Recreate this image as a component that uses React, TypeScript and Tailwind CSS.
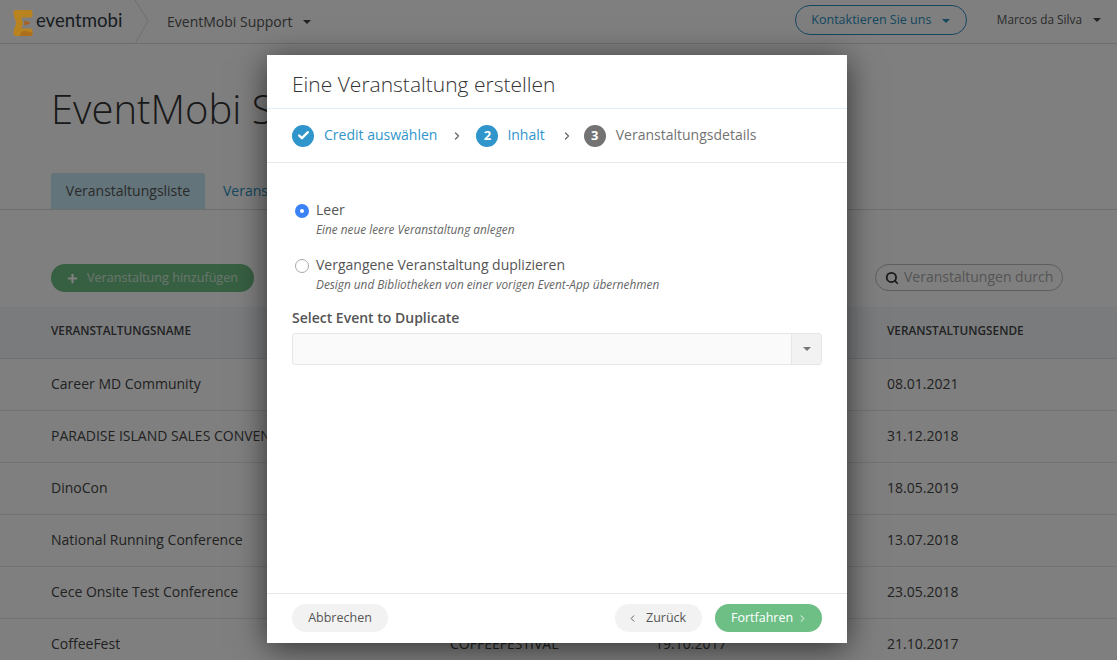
import React from 'react';
import { Check, ChevronLeft, ChevronRight, Plus, Search } from 'lucide-react';

const rows = [
  { name: 'Career MD Community', end: '08.01.2021' },
  { name: 'PARADISE ISLAND SALES CONVENTION', end: '31.12.2018' },
  { name: 'DinoCon', end: '18.05.2019' },
  { name: 'National Running Conference', end: '13.07.2018' },
  { name: 'Cece Onsite Test Conference', end: '23.05.2018' },
  { name: 'CoffeeFest', code: 'COFFEEFESTIVAL', start: '19.10.2017', end: '21.10.2017' },
];

const Caret: React.FC<{ className?: string }> = ({ className }) => (
  <svg width="8" height="4" viewBox="0 0 8 4" className={className}>
    <path d="M0 0h8L4 4z" fill="currentColor" />
  </svg>
);

const Logo: React.FC = () => (
  <svg width="20" height="26" viewBox="0 0 20 26" className="relative z-10">
    <path
      d="M2.500 0H17.500a2 2 0 0 1 2 2V5.500a2 2 0 0 1-2 2H8.500L10 13 8.500 18.500H17.500a2 2 0 0 1 2 2V23.500A2.500 2.500 0 0 1 17 26H3A2.500 2.500 0 0 1 .5 23.500C.5 18 3 16 3 13 3 10 .5 8 .5 2.500A2 2 0 0 1 2.500 0z"
      fill="#b98320"
    />
    <path d="M11.500 10.500L18 13l-6.500 2.500z" fill="#a8601c" />
    <path d="M7 26c0-3 2-5 5-5s5 2 7.500 1.500v1A2.500 2.500 0 0 1 17 26z" fill="#ad6f1e" />
  </svg>
);

const Page: React.FC = () => (
  <div className="h-[660px] overflow-hidden bg-white text-[#333]">
    <header className="flex h-11 items-center border-b border-[#ddd]">
      <div className="flex w-[137px] items-center pl-[13px] pt-0.5">
        <Logo />
        <span className="ml-[3px] -mt-1 font-['Lato',sans-serif] text-[18.600px] leading-none text-[#2f3a45]">eventmobi</span>
      </div>
      <svg width="16" height="44" viewBox="0 0 16 44" className="shrink-0 -ml-1">
        <path d="M2 0l13 21L2 44" fill="none" stroke="#ddd" />
      </svg>
      <span className="ml-[18px] text-sm text-[#555]">EventMobi Support</span>
      <Caret className="ml-[10px] text-[#444]" />
      <div className="ml-auto mb-[3px] flex h-[30px] w-[172px] items-center justify-center gap-[11px] rounded-full border border-[#2a8fbf] pt-px text-[12.500px] text-[#2a8fbf]">
        Kontaktieren Sie uns
        <Caret className="text-[#2a8fbf]" />
      </div>
      <span className="ml-[30px] mb-[3px] text-[11.800px] text-[#555]">Marcos da Silva</span>
      <Caret className="ml-[11px] mr-[16px] mb-[3px] text-[#444]" />
    </header>

    <h1 className="mt-[39px] pl-[51px] text-[40px] font-light leading-[52px] text-[#333]">EventMobi Support</h1>

    <nav className="mt-[38px] flex h-[37px] border-b border-[#ddd] pl-[51px] text-sm">
      <div className="flex w-[154px] items-center justify-center rounded-t-[3px] bg-[#c9e9f6] text-[#555]">Veranstaltungsliste</div>
      <div className="flex items-center pl-[18px] text-[#2a8fbf]">Veranstaltungsvorlagen</div>
    </nav>

    <div className="flex h-[97px] items-start justify-between px-[51px] pt-[54px] pr-[54px]">
      <div className="flex h-7 w-[203px] items-center rounded-full bg-[#6ebf85] pl-[15px] text-[12.600px] text-white">
        <Plus size={13} strokeWidth={4} />
        <span className="ml-2 opacity-70">Veranstaltung hinzufügen</span>
      </div>
      <div className="flex h-[27px] w-[188px] items-center whitespace-nowrap rounded-full border border-[#bbb] pl-[9px] text-sm text-[#aaa]">
        <Search size={14} strokeWidth={3} className="shrink-0 text-[#333]" />
        <span className="ml-[5px] -mt-[2px]">Veranstaltungen durch</span>
      </div>
    </div>

    <div className="flex h-[52px] items-center border-b border-[#dbe3e8] bg-[#f3f7fa] pb-1 text-[11.800px] font-semibold text-[#444]">
      <div className="w-[450px] pl-[51px]">VERANSTALTUNGSNAME</div>
      <div className="ml-[437px]">VERANSTALTUNGSENDE</div>
    </div>

    {rows.map((r) => (
      <div key={r.name} className="flex h-[52px] shrink-0 items-center border-b border-[#e6e6e6] pb-[2px] text-sm text-[#444]">
        <div className="w-[450px] whitespace-nowrap pl-[51px]">{r.name}</div>
        <div className="w-[205px]">{r.code}</div>
        <div className="w-[232px]">{r.start}</div>
        <div>{r.end}</div>
      </div>
    ))}
  </div>
);

const Step: React.FC<{ badge: React.ReactNode; label: string; active?: boolean; gap: string }> = ({ badge, label, active, gap }) => (
  <div className="flex items-center">
    <div
      className={`flex h-[22px] w-[22px] items-center justify-center rounded-full text-[13px] font-bold text-white ${
        active ? 'bg-[#2f95cb]' : 'bg-[#737373]'
      }`}
    >
      {badge}
    </div>
    <span className={`${gap} -mt-px text-sm ${active ? 'text-[#2f95cb]' : 'text-[#737373]'}`}>{label}</span>
  </div>
);

const Option: React.FC<{ title: string; hint: string; checked?: boolean }> = ({ title, hint, checked }) => (
  <div className="flex">
    {checked ? (
      <div className="mt-[4px] flex h-[14px] w-[14px] items-center justify-center rounded-full bg-[#3b82f6]">
        <div className="h-1 w-1 rounded-full bg-white" />
      </div>
    ) : (
      <div className="mt-[4px] h-[14px] w-[14px] rounded-full border border-[#aaa] bg-white" />
    )}
    <div className="ml-[7px]">
      <div className="text-sm leading-[19px] text-[#555]">{title}</div>
      <div className="mt-[2px] text-[11.800px] italic leading-4 text-[#666]">{hint}</div>
    </div>
  </div>
);

const Modal: React.FC = () => (
  <div className="absolute left-[267px] top-[55px] flex h-[588px] w-[580px] flex-col bg-white shadow-[0_5px_30px_rgba(0,0,0,0.6)]">
    <div className="flex h-[54px] items-center border-b border-[#e2eef5] pl-[25px] pt-[6px] text-[21px] font-light text-[#333]">
      Eine Veranstaltung erstellen
    </div>
    <div className="flex h-[54px] items-center border-b border-[#e6e9eb] pl-[25px]">
      <Step active gap="ml-[10px]" label="Credit auswählen" badge={<Check size={13} strokeWidth={4.500} />} />
      <ChevronRight size={12} strokeWidth={2.500} className="ml-[14px] mr-[13px] text-[#666]" />
      <Step active gap="ml-[9px]" label="Inhalt" badge="2" />
      <ChevronRight size={12} strokeWidth={2.500} className="ml-[16px] mr-[11px] text-[#666]" />
      <Step gap="ml-[10px]" label="Veranstaltungsdetails" badge="3" />
    </div>

    <div className="flex-1 px-[25px] pt-[37px]">
      <div className="flex flex-col gap-[18px] pl-[3px]">
        <Option checked title="Leer" hint="Eine neue leere Veranstaltung anlegen" />
        <Option title="Vergangene Veranstaltung duplizieren" hint="Design und Bibliotheken von einer vorigen Event-App übernehmen" />
      </div>
      <div className="mt-4 text-sm font-semibold leading-[19px] text-[#555]">Select Event to Duplicate</div>
      <div className="mt-[6px] flex h-8 overflow-hidden rounded-[3px] border border-[#e6e6e6] bg-[#fafafa]">
        <div className="flex-1" />
        <div className="flex w-[30px] items-center justify-center border-l border-[#e6e6e6] bg-[#f2f2f2]">
          <Caret className="text-[#777]" />
        </div>
      </div>
    </div>

    <div className="flex h-[50px] items-center justify-between border-t border-[#e6e6e6] px-[25px] pb-[1px]">
      <div className="flex h-7 w-[96px] items-center justify-center rounded-full bg-[#f2f2f2] text-[12.500px] text-[#555]">Abbrechen</div>
      <div className="flex gap-[13px]">
        <div className="flex h-7 w-[87px] items-center gap-2 rounded-full bg-[#f2f2f2] pl-3 text-[12.500px] text-[#555]">
          <ChevronLeft size={11} strokeWidth={2} />
          Zurück
        </div>
        <div className="flex h-7 w-[107px] items-center gap-1 rounded-full bg-[#6ebf85] pl-4 text-[12.500px] text-white">
          Fortfahren
          <ChevronRight size={11} strokeWidth={2} />
        </div>
      </div>
    </div>
  </div>
);

export default function App() {
  return (
    <div className="relative h-[660px] w-[1117px] overflow-hidden font-['Open_Sans',sans-serif]">
      <Page />
      <div className="absolute inset-0 bg-black/50" />
      <Modal />
    </div>
  );
}
